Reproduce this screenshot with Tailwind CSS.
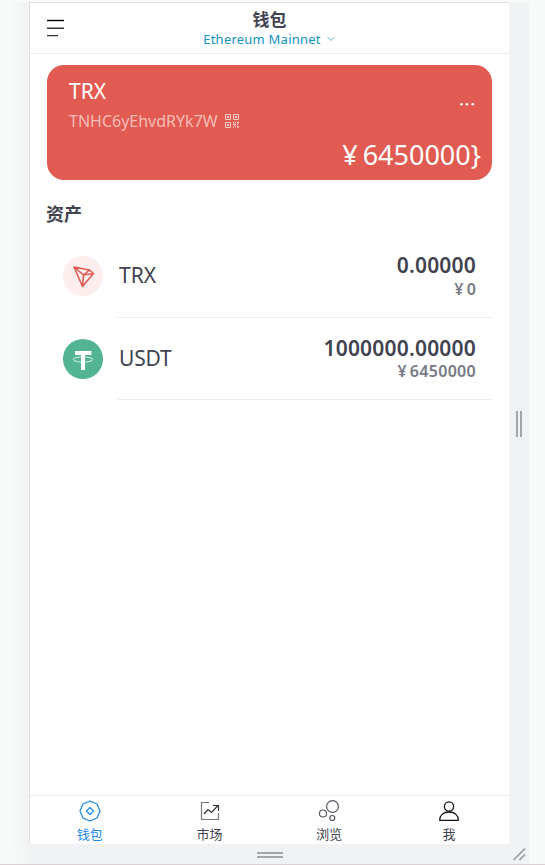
<!DOCTYPE html>
<html lang="zh-CN">
<head>
  <meta charset="UTF-8" />
  <meta name="viewport" content="width=device-width, initial-scale=1.0" />
  <title>钱包</title>
  <script src="https://cdn.jsdelivr.net/npm/@tailwindcss/browser@4"></script>
</head>
<body class="h-[865px] overflow-hidden bg-[#f8faf9] font-['Noto_Sans','Noto_Sans_CJK_SC',sans-serif] text-[#40424f]">

  <div class="flex h-[865px] flex-col border-b border-[#d9d2d5] pt-0.5">
    <div class="flex h-[842px]">
      <div class="w-[29px] shrink-0 bg-linear-to-r from-[#f8faf9] from-30% to-[#f1f3f2]"></div>

      <!-- Phone screen -->
      <main class="flex w-[480px] shrink-0 flex-col border-t border-l border-[#dfe1e1] bg-white">

        <!-- Header -->
        <header class="flex h-[51px] shrink-0 border-b border-[#ebebf5]">
          <div class="w-[100px] pt-4 pl-[17px]">
            <svg width="18" height="20" viewBox="0 0 18 20" fill="none" stroke-width="1.4">
              <path d="M0 1.500H17" stroke="#000" />
              <path d="M0 9.300H17M0 16.600H11" stroke="#333" />
            </svg>
          </div>
          <div class="flex flex-1 flex-col items-center">
            <h1 class="mt-1.5 h-[22px] text-[17px] leading-[22px] font-bold">钱包</h1>
            <div class="-mt-px -ml-px flex h-[18px] items-center gap-1.5 text-[#1492c4]">
              <span class="text-[13px] leading-[18px] tracking-[0.23px]">Ethereum Mainnet</span>
              <svg width="8" height="6" viewBox="0 0 8 6" fill="none" stroke="#5bb5d6" stroke-width="1"><path d="M.5 1L4 4.500L7.500 1" /></svg>
            </div>
          </div>
          <div class="w-[100px]"></div>
        </header>

        <!-- Wallet card -->
        <section class="mx-[17px] mt-[11px] flex h-[115px] shrink-0 flex-col rounded-[17px] bg-[#e15b52] pl-[22px] text-white">
          <div class="flex h-[72px]">
            <div class="flex-1 pt-3">
              <h2 class="text-[21px] leading-7">TRX</h2>
              <div class="mt-1 flex items-center gap-[7px] text-[#f5bcb8]">
                <span class="text-[16px] leading-6">TNHC6yEhvdRYk7W</span>
                <svg width="14" height="14" viewBox="0 0 14 14" fill="none" stroke="#f8cfcc">
                  <path d="M.5.5h5v5h-5zM8.500.5h5v5h-5zM.5 8.500h5v5h-5z" />
                  <path d="M2 3h2M10 3h2M2 11h2" stroke-width="2" />
                  <path d="M8 8.500h1M10 8.500h1M12 8.500h2M8 10.500h3M12 10.500h1M8 13h1M10 12.500h1M12 13h2" stroke-width="1.500" />
                </svg>
              </div>
            </div>
            <svg class="mt-[37px] mr-[17px]" width="15" height="4" viewBox="0 0 15 4" fill="#fff">
              <circle cx="1.500" cy="2.300" r="1.300" /><circle cx="7" cy="2.300" r="1.300" /><circle cx="12.800" cy="2.300" r="1.300" />
            </svg>
          </div>
          <div class="mt-px flex h-[34px] items-center justify-end gap-[5px] pr-[11px] text-[27px] leading-[34px]">
            <span>¥</span><span>6450000}</span>
          </div>
        </section>

        <h2 class="mt-[22px] ml-[16px] shrink-0 text-[18px] leading-6 font-bold">资产</h2>

        <!-- Assets -->
        <ul class="mt-[9px] mr-[17px] ml-[33px] flex-1">
          <li class="flex h-[83px]">
            <svg class="mt-[21px] mr-[15px]" width="40" height="40" viewBox="0 0 40 40" fill="none">
              <circle cx="20" cy="20" r="20" fill="#fdeeed" />
              <path d="M11 11L26.500 14L30.500 17.500L19.500 30.500ZM11 11L20.500 19L19.500 30.500M20.500 19L26.500 14M20.500 19L30.500 17.500" stroke="#e15b52" stroke-width="1.600" stroke-linejoin="round" />
            </svg>
            <div class="flex flex-1 justify-between border-b border-[#ebebf5] pr-4">
              <span class="pt-[26px] pl-px text-[21px] leading-7">TRX</span>
              <div class="flex flex-col items-end pt-4 font-semibold">
                <span class="text-[21px] leading-7 tracking-[0.2px]">0.00000</span>
                <span class="flex gap-[3px] text-[16px] leading-5 tracking-[0.2px] text-[#777986]"><span>¥</span><span>0</span></span>
              </div>
            </div>
          </li>
          <li class="flex h-[82px]">
            <svg class="mt-[21px] mr-[15px]" width="40" height="40" viewBox="0 0 40 40" fill="none">
              <circle cx="20" cy="20" r="20" fill="#53b494" />
              <path d="M12 12h16.500v4H22v15h-4V16h-6z" fill="#fff" />
              <ellipse cx="20" cy="20.500" rx="9.800" ry="2.600" stroke="#fff" stroke-width=".8" />
            </svg>
            <div class="flex flex-1 justify-between border-b border-[#ebebf5] pr-4">
              <span class="pt-[26px] pl-px text-[21px] leading-7 tracking-[-0.2px]">USDT</span>
              <div class="flex flex-col items-end pt-4 font-semibold">
                <span class="text-[21px] leading-7 tracking-[0.2px]">1000000.00000</span>
                <span class="-mt-px flex gap-[3px] text-[16px] leading-5 tracking-[0.3px] text-[#777986]"><span>¥</span><span>6450000</span></span>
              </div>
            </div>
          </li>
        </ul>

        <!-- Tab bar -->
        <nav class="grid h-[49px] shrink-0 grid-cols-4 border-t border-[#ebebf5] text-[13px] leading-4">
          <a class="flex flex-col items-center gap-1 pt-1 text-[#1989e8]">
            <svg width="22" height="22" viewBox="0 0 22 22" fill="none" stroke="currentColor" stroke-width="1.200">
              <path d="M11 1L18 4L21 11L18 18L11 21L4 18L1 11L4 4Z" stroke-linejoin="round" />
              <path d="M11 7.500L14.500 11L11 14.500L7.500 11Z" stroke-linejoin="round" />
            </svg>
            <span>钱包</span>
          </a>
          <a class="flex flex-col items-center gap-1 pt-1">
            <svg width="22" height="22" viewBox="0 0 22 22" fill="none" stroke-width="1.200">
              <path d="M10 2.500H2.500V19.500H19.500V13" stroke="#777" />
              <path d="M5 14L9 9.500L12.500 12.500L19 5.500M14 5.500H19.500V11" stroke="#333" />
            </svg>
            <span>市场</span>
          </a>
          <a class="flex flex-col items-center gap-1 pt-1">
            <svg width="22" height="22" viewBox="0 0 22 22" fill="none" stroke="#555762" stroke-width="1.200">
              <circle cx="14.500" cy="6.500" r="5.900" /><circle cx="5" cy="13.500" r="3.500" /><circle cx="14.300" cy="18" r="2.500" />
            </svg>
            <span>浏览</span>
          </a>
          <a class="flex flex-col items-center gap-1 pt-1">
            <svg width="22" height="22" viewBox="0 0 22 22" fill="none" stroke="#111" stroke-width="1.300">
              <circle cx="11" cy="6.500" r="4.600" />
              <path d="M1.700 20.300C1.700 15 5.500 12 11 12S20.300 15 20.300 20.300Z" stroke-linejoin="round" />
            </svg>
            <span>我</span>
          </a>
        </nav>
      </main>

      <!-- Right resize handle -->
      <div class="mt-px flex w-5 shrink-0 justify-center gap-0.5 bg-[#f1f2f4] pt-[408px]">
        <div class="h-[26px] w-0.5 bg-[#a3a5a6]"></div>
        <div class="h-[26px] w-0.5 bg-[#a3a5a6]"></div>
      </div>
    </div>

    <!-- Bottom resize handle -->
    <div class="flex h-5">
      <div class="w-[30px] bg-linear-to-r from-[#f8faf9] from-30% to-[#f3f5f4]"></div>
      <div class="flex w-[479px] flex-col items-center gap-0.5 bg-[#f1f2f4] pt-2">
        <div class="h-0.5 w-[26px] bg-[#a3a5a6]"></div>
        <div class="h-0.5 w-[26px] bg-[#a3a5a6]"></div>
      </div>
      <div class="w-5 bg-[#f1f2f4] pt-1 pl-1">
        <svg width="13" height="13" viewBox="0 0 13 13" stroke="#a3a5a6" stroke-width="1.800"><path d="M.5 12L12 .5M6.500 12L12 6.500" /></svg>
      </div>
    </div>
  </div>

</body>
</html>
